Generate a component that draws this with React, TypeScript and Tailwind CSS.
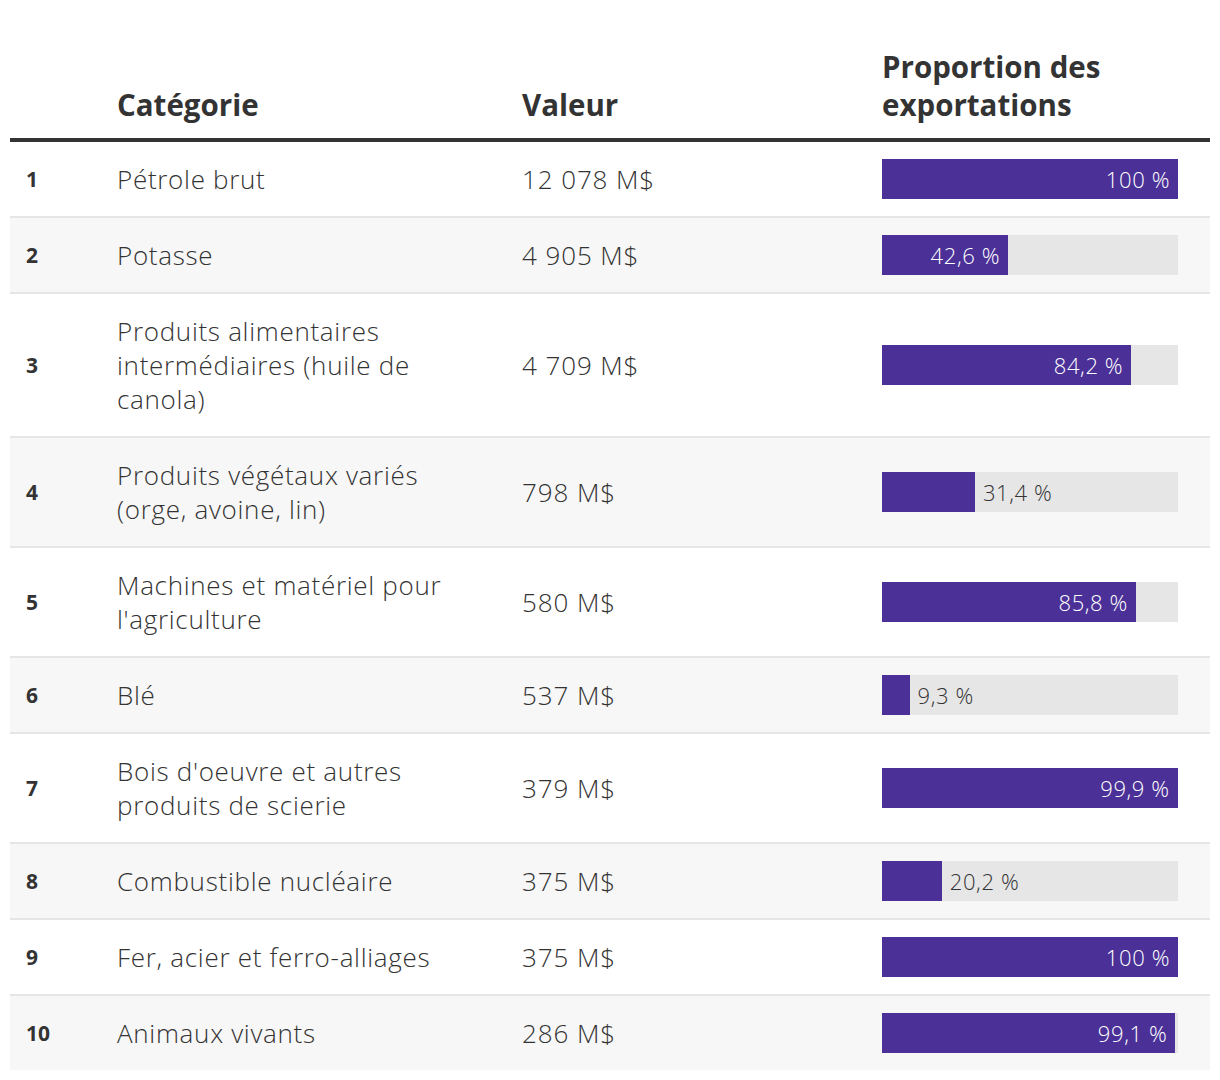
type Row = { rank: number; cat: string; val: string; pct: number; label: string };

const rows: Row[] = [
  { rank: 1, cat: "Pétrole brut", val: "12 078 M$", pct: 100, label: "100 %" },
  { rank: 2, cat: "Potasse", val: "4 905 M$", pct: 42.6, label: "42,6 %" },
  { rank: 3, cat: "Produits alimentaires intermédiaires (huile de canola)", val: "4 709 M$", pct: 84.2, label: "84,2 %" },
  { rank: 4, cat: "Produits végétaux variés (orge, avoine, lin)", val: "798 M$", pct: 31.4, label: "31,4 %" },
  { rank: 5, cat: "Machines et matériel pour l'agriculture", val: "580 M$", pct: 85.8, label: "85,8 %" },
  { rank: 6, cat: "Blé", val: "537 M$", pct: 9.3, label: "9,3 %" },
  { rank: 7, cat: "Bois d'oeuvre et autres produits de scierie", val: "379 M$", pct: 99.9, label: "99,9 %" },
  { rank: 8, cat: "Combustible nucléaire", val: "375 M$", pct: 20.2, label: "20,2 %" },
  { rank: 9, cat: "Fer, acier et ferro-alliages", val: "375 M$", pct: 100, label: "100 %" },
  { rank: 10, cat: "Animaux vivants", val: "286 M$", pct: 99.1, label: "99,1 %" },
];

function Bar({ pct, label }: { pct: number; label: string }) {
  const inside = pct >= 35;
  return (
    <div className="flex h-10 w-[296px] items-center bg-[#e6e6e6]">
      <div
        className="flex h-10 shrink-0 items-center justify-end bg-[#4b3197] pr-2"
        style={{ width: `${pct}%` }}
      >
        {inside && <span className="text-[22px] font-light leading-none tracking-[0.6px] text-white">{label}</span>}
      </div>
      {!inside && <span className="pl-2 text-[22px] font-light leading-none tracking-[0.6px] text-[#333]">{label}</span>}
    </div>
  );
}

export default function App() {
  return (
    <div className="bg-white px-[10px] pt-[34px] font-['Open_Sans',sans-serif] text-[#333]">
      <table className="w-[1200px] table-fixed border-collapse">
        <colgroup>
          <col className="w-[91px]" />
          <col className="w-[405px]" />
          <col className="w-[360px]" />
          <col className="w-[344px]" />
        </colgroup>
        <thead>
          <tr className="border-b-4 border-[#333]">
            <th className="px-4 pt-[14px] pb-[14px]"></th>
            <th className="px-4 pt-[14px] pb-[14px] text-left align-bottom text-[29.5px] font-bold leading-[38px]">Catégorie</th>
            <th className="px-4 pt-[14px] pb-[14px] text-left align-bottom text-[29.5px] font-bold leading-[38px]">Valeur</th>
            <th className="px-4 pt-[14px] pb-[14px] text-left align-bottom text-[29.5px] font-bold leading-[38px]">
              Proportion des exportations
            </th>
          </tr>
        </thead>
        <tbody>
          {rows.map((r, i) => (
            <tr
              key={r.rank}
              className={`${i % 2 === 1 ? "bg-[#f7f7f7]" : "bg-white"} ${i < rows.length - 1 ? "border-b-2 border-[#e6e6e6]" : ""}`}
            >
              <td className="px-4 py-5 align-middle text-[21px] font-bold leading-[34px]">{r.rank}</td>
              <td className="px-4 py-5 align-middle text-[26px] font-light leading-[34px] tracking-[0.7px]">
                <div className="max-w-[350px]">{r.cat}</div>
              </td>
              <td className="px-4 py-5 align-middle text-[26px] font-light leading-[34px] tracking-[0.9px]">{r.val}</td>
              <td className="px-4 py-0 align-middle">
                <Bar pct={r.pct} label={r.label} />
              </td>
            </tr>
          ))}
        </tbody>
      </table>
    </div>
  );
}
